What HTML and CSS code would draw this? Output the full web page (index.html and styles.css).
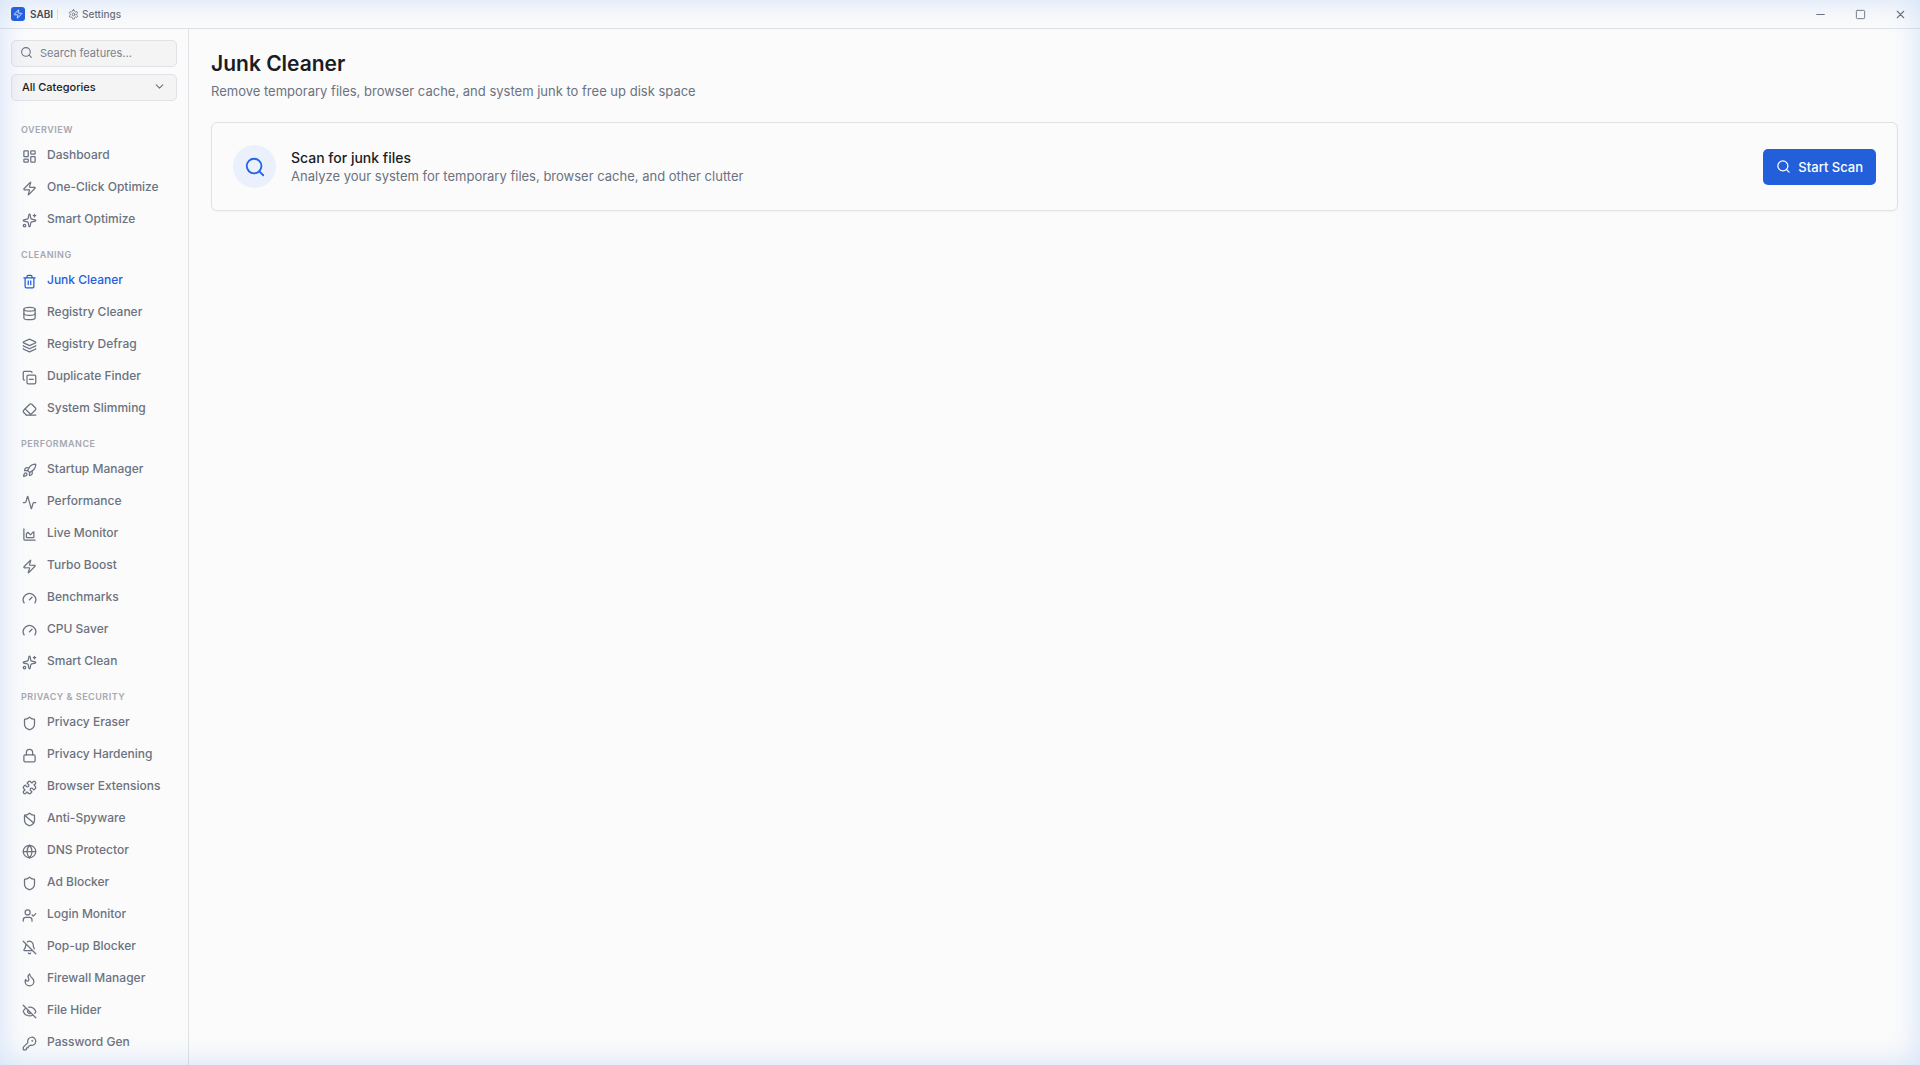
FILE: index.html
```html
<!DOCTYPE html>
<html lang="en">
<head>
    <meta charset="UTF-8">
    <meta name="viewport" content="width=device-width, initial-scale=1.0">
    <title>SABI - Junk Cleaner</title>
    <link rel="stylesheet" href="styles.css">
</head>
<body>

<!-- icon set -->
<svg class="sprite" aria-hidden="true">
    <symbol id="i-zap" viewBox="0 0 24 24"><path d="M4 14a1 1 0 0 1-.78-1.63l9.9-10.2a.5.5 0 0 1 .86.46l-1.92 6.02A1 1 0 0 0 13 10h7a1 1 0 0 1 .78 1.63l-9.9 10.2a.5.5 0 0 1-.86-.46l1.92-6.02A1 1 0 0 0 11 14z"/></symbol>
    <symbol id="i-settings" viewBox="0 0 24 24"><path d="M12.22 2h-.44a2 2 0 0 0-2 2v.18a2 2 0 0 1-1 1.73l-.43.25a2 2 0 0 1-2 0l-.15-.08a2 2 0 0 0-2.73.73l-.22.38a2 2 0 0 0 .73 2.73l.15.1a2 2 0 0 1 1 1.72v.51a2 2 0 0 1-1 1.74l-.15.09a2 2 0 0 0-.73 2.73l.22.38a2 2 0 0 0 2.73.73l.15-.08a2 2 0 0 1 2 0l.43.25a2 2 0 0 1 1 1.73V20a2 2 0 0 0 2 2h.44a2 2 0 0 0 2-2v-.18a2 2 0 0 1 1-1.73l.43-.25a2 2 0 0 1 2 0l.15.08a2 2 0 0 0 2.73-.73l.22-.39a2 2 0 0 0-.73-2.73l-.15-.08a2 2 0 0 1-1-1.74v-.5a2 2 0 0 1 1-1.74l.15-.09a2 2 0 0 0 .73-2.73l-.22-.38a2 2 0 0 0-2.73-.73l-.15.08a2 2 0 0 1-2 0l-.43-.25a2 2 0 0 1-1-1.73V4a2 2 0 0 0-2-2z"/><circle cx="12" cy="12" r="3"/></symbol>
    <symbol id="i-minus" viewBox="0 0 24 24"><path d="M5 12h14"/></symbol>
    <symbol id="i-square" viewBox="0 0 24 24"><rect width="18" height="18" x="3" y="3" rx="2"/></symbol>
    <symbol id="i-x" viewBox="0 0 24 24"><path d="M18 6 6 18M6 6l12 12"/></symbol>
    <symbol id="i-search" viewBox="0 0 24 24"><circle cx="11" cy="11" r="8"/><path d="m21 21-4.3-4.3"/></symbol>
    <symbol id="i-chevron" viewBox="0 0 24 24"><path d="m6 9 6 6 6-6"/></symbol>
    <symbol id="i-dashboard" viewBox="0 0 24 24"><rect width="7" height="9" x="3" y="3" rx="1"/><rect width="7" height="5" x="14" y="3" rx="1"/><rect width="7" height="9" x="14" y="12" rx="1"/><rect width="7" height="5" x="3" y="16" rx="1"/></symbol>
    <symbol id="i-sparkles" viewBox="0 0 24 24"><path d="M11.017 2.814a1 1 0 0 1 1.966 0l1.051 5.558a2 2 0 0 0 1.594 1.594l5.558 1.051a1 1 0 0 1 0 1.966l-5.558 1.051a2 2 0 0 0-1.594 1.594l-1.051 5.558a1 1 0 0 1-1.966 0l-1.051-5.558a2 2 0 0 0-1.594-1.594l-5.558-1.051a1 1 0 0 1 0-1.966l5.558-1.051a2 2 0 0 0 1.594-1.594z"/><path d="M20 2v4M22 4h-4"/><circle cx="4" cy="20" r="2"/></symbol>
    <symbol id="i-trash" viewBox="0 0 24 24"><path d="M3 6h18M19 6v14a2 2 0 0 1-2 2H7a2 2 0 0 1-2-2V6M8 6V4a2 2 0 0 1 2-2h4a2 2 0 0 1 2 2v2M10 11v6M14 11v6"/></symbol>
    <symbol id="i-database" viewBox="0 0 24 24"><ellipse cx="12" cy="5" rx="9" ry="3"/><path d="M3 5v14a9 3 0 0 0 18 0V5"/><path d="M3 12a9 3 0 0 0 18 0"/></symbol>
    <symbol id="i-layers" viewBox="0 0 24 24"><path d="M12.83 2.18a2 2 0 0 0-1.66 0L2.6 6.08a1 1 0 0 0 0 1.83l8.58 3.91a2 2 0 0 0 1.66 0l8.58-3.9a1 1 0 0 0 0-1.83z"/><path d="M2 12a1 1 0 0 0 .58.91l8.6 3.91a2 2 0 0 0 1.65 0l8.58-3.9A1 1 0 0 0 22 12"/><path d="M2 17a1 1 0 0 0 .58.91l8.6 3.91a2 2 0 0 0 1.65 0l8.58-3.9A1 1 0 0 0 22 17"/></symbol>
    <symbol id="i-copy-minus" viewBox="0 0 24 24"><path d="M12 15h6"/><rect width="14" height="14" x="8" y="8" rx="2"/><path d="M4 16c-1.1 0-2-.9-2-2V4c0-1.1.9-2 2-2h10c1.1 0 2 .9 2 2"/></symbol>
    <symbol id="i-eraser" viewBox="0 0 24 24"><path d="m7 21-4.3-4.3c-1-1-1-2.5 0-3.4l9.6-9.6c1-1 2.5-1 3.4 0l5.6 5.6c1 1 1 2.5 0 3.4L13 21"/><path d="M22 21H7M5 11l9 9"/></symbol>
    <symbol id="i-rocket" viewBox="0 0 24 24"><path d="M4.5 16.5c-1.5 1.26-2 5-2 5s3.74-.5 5-2c.71-.84.7-2.13-.09-2.91a2.18 2.18 0 0 0-2.91-.09z"/><path d="m12 15-3-3a22 22 0 0 1 2-3.95A12.88 12.88 0 0 1 22 2c0 2.72-.78 7.5-6 11a22.35 22.35 0 0 1-4 2z"/><path d="M9 12H4s.55-3.03 2-4c1.62-1.08 5 0 5 0M12 15v5s3.03-.55 4-2c1.08-1.62 0-5 0-5"/></symbol>
    <symbol id="i-activity" viewBox="0 0 24 24"><path d="M22 12h-2.48a2 2 0 0 0-1.93 1.46l-2.35 8.36a.25.25 0 0 1-.48 0L9.24 2.18a.25.25 0 0 0-.48 0l-2.35 8.36A2 2 0 0 1 4.49 12H2"/></symbol>
    <symbol id="i-chart" viewBox="0 0 24 24"><path d="M3 3v16a2 2 0 0 0 2 2h16"/><path d="M7 11.207a.5.5 0 0 1 .146-.353l2-2a.5.5 0 0 1 .708 0l3.292 3.292a.5.5 0 0 0 .708 0l4.292-4.292a.5.5 0 0 1 .854.353V16a1 1 0 0 1-1 1H8a1 1 0 0 1-1-1z"/></symbol>
    <symbol id="i-gauge" viewBox="0 0 24 24"><path d="m12 14 4-4M3.34 19a10 10 0 1 1 17.32 0"/></symbol>
    <symbol id="i-shield" viewBox="0 0 24 24"><path d="M20 13c0 5-3.5 7.5-7.66 8.95a1 1 0 0 1-.67-.01C7.5 20.5 4 18 4 13V6a1 1 0 0 1 1-1c2 0 4.5-1.2 6.24-2.72a1.17 1.17 0 0 1 1.52 0C14.51 3.81 17 5 19 5a1 1 0 0 1 1 1z"/></symbol>
    <symbol id="i-lock" viewBox="0 0 24 24"><rect width="18" height="11" x="3" y="11" rx="2"/><path d="M7 11V7a5 5 0 0 1 10 0v4"/></symbol>
    <symbol id="i-puzzle" viewBox="0 0 24 24"><path d="M15.39 4.39a1 1 0 0 0 1.68-.474 2.5 2.5 0 1 1 3.014 3.015 1 1 0 0 0-.474 1.68l1.683 1.682a2.414 2.414 0 0 1 0 3.414L19.61 15.39a1 1 0 0 1-1.68-.474 2.5 2.5 0 1 0-3.014 3.015 1 1 0 0 1 .474 1.68l-1.683 1.682a2.414 2.414 0 0 1-3.414 0L8.61 19.61a1 1 0 0 0-1.68.474 2.5 2.5 0 1 1-3.014-3.015 1 1 0 0 0 .474-1.68l-1.683-1.682a2.414 2.414 0 0 1 0-3.414L4.39 8.61a1 1 0 0 1 1.68.474 2.5 2.5 0 1 0 3.014-3.015 1 1 0 0 1-.474-1.68l1.683-1.682a2.414 2.414 0 0 1 3.414 0z"/></symbol>
    <symbol id="i-shield-ban" viewBox="0 0 24 24"><path d="M20 13c0 5-3.5 7.5-7.66 8.95a1 1 0 0 1-.67-.01C7.5 20.5 4 18 4 13V6a1 1 0 0 1 1-1c2 0 4.5-1.2 6.24-2.72a1.17 1.17 0 0 1 1.52 0C14.51 3.81 17 5 19 5a1 1 0 0 1 1 1z"/><path d="m4.243 5.21 14.39 12.472"/></symbol>
    <symbol id="i-globe" viewBox="0 0 24 24"><circle cx="12" cy="12" r="10"/><path d="M12 2a14.5 14.5 0 0 0 0 20 14.5 14.5 0 0 0 0-20M2 12h20"/></symbol>
    <symbol id="i-user-check" viewBox="0 0 24 24"><path d="m16 11 2 2 4-4M16 21v-2a4 4 0 0 0-4-4H6a4 4 0 0 0-4 4v2"/><circle cx="9" cy="7" r="4"/></symbol>
    <symbol id="i-bell-off" viewBox="0 0 24 24"><path d="M10.268 21a2 2 0 0 0 3.464 0M17 17H4a1 1 0 0 1-.74-1.673C4.59 13.956 6 12.499 6 8a6 6 0 0 1 .258-1.742M2 2l20 20M8.668 3.01A6 6 0 0 1 18 8c0 2.687.77 4.653 1.707 6.05"/></symbol>
    <symbol id="i-flame" viewBox="0 0 24 24"><path d="M8.5 14.5A2.5 2.5 0 0 0 11 12c0-1.38-.5-2-1-3-1.072-2.143-.224-4.054 2-6 .5 2.5 2 4.9 4 6.5 2 1.6 3 3.5 3 5.5a7 7 0 1 1-14 0c0-1.153.433-2.294 1-3a2.5 2.5 0 0 0 2.5 2.5z"/></symbol>
    <symbol id="i-eye-off" viewBox="0 0 24 24"><path d="M10.733 5.076a10.744 10.744 0 0 1 11.205 6.575 1 1 0 0 1 0 .696 10.747 10.747 0 0 1-1.444 2.49M14.084 14.158a3 3 0 0 1-4.242-4.242M17.479 17.499a10.75 10.75 0 0 1-15.417-5.151 1 1 0 0 1 0-.696 10.75 10.75 0 0 1 4.446-5.143M2 2l20 20"/></symbol>
    <symbol id="i-key" viewBox="0 0 24 24"><path d="M2.586 17.414A2 2 0 0 0 2 18.828V21a1 1 0 0 0 1 1h3a1 1 0 0 0 1-1v-1a1 1 0 0 1 1-1h1a1 1 0 0 0 1-1v-1a1 1 0 0 1 1-1h.172a2 2 0 0 0 1.414-.586l.814-.814a6.5 6.5 0 1 0-4-4z"/><circle cx="16.5" cy="7.5" r=".5"/></symbol>
</svg>

<div class="app">
    <header class="titlebar">
        <div class="logo"><svg class="icon"><use href="#i-zap"/></svg></div>
        <span class="brand">SABI</span>
        <span class="divider"></span>
        <button class="settings-btn"><svg class="icon"><use href="#i-settings"/></svg>Settings</button>
        <div class="window-controls">
            <button aria-label="Minimize"><svg class="icon"><use href="#i-minus"/></svg></button>
            <button aria-label="Maximize"><svg class="icon icon-max"><use href="#i-square"/></svg></button>
            <button aria-label="Close"><svg class="icon icon-close"><use href="#i-x"/></svg></button>
        </div>
    </header>

    <div class="body">
        <aside class="sidebar">
            <div class="filters">
                <label class="field" for="search">
                    <svg class="icon"><use href="#i-search"/></svg>
                    <input type="text" id="search" placeholder="Search features..." aria-label="Search features">
                </label>
                <div class="field">
                    <select id="category" aria-label="Category">
                        <option>All Categories</option>
                        <option>Overview</option>
                        <option>Cleaning</option>
                        <option>Performance</option>
                        <option>Privacy &amp; Security</option>
                    </select>
                    <svg class="icon chevron"><use href="#i-chevron"/></svg>
                </div>
            </div>

            <nav class="nav">
                <h2>Overview</h2>
                <a href="#"><svg class="icon"><use href="#i-dashboard"/></svg><span>Dashboard</span></a>
                <a href="#"><svg class="icon"><use href="#i-zap"/></svg><span>One-Click Optimize</span></a>
                <a href="#"><svg class="icon"><use href="#i-sparkles"/></svg><span>Smart Optimize</span></a>

                <h2>Cleaning</h2>
                <a href="#" class="active"><svg class="icon"><use href="#i-trash"/></svg><span>Junk Cleaner</span></a>
                <a href="#"><svg class="icon"><use href="#i-database"/></svg><span>Registry Cleaner</span></a>
                <a href="#"><svg class="icon"><use href="#i-layers"/></svg><span>Registry Defrag</span></a>
                <a href="#"><svg class="icon"><use href="#i-copy-minus"/></svg><span>Duplicate Finder</span></a>
                <a href="#"><svg class="icon"><use href="#i-eraser"/></svg><span>System Slimming</span></a>

                <h2>Performance</h2>
                <a href="#"><svg class="icon"><use href="#i-rocket"/></svg><span>Startup Manager</span></a>
                <a href="#"><svg class="icon"><use href="#i-activity"/></svg><span>Performance</span></a>
                <a href="#"><svg class="icon"><use href="#i-chart"/></svg><span>Live Monitor</span></a>
                <a href="#"><svg class="icon"><use href="#i-zap"/></svg><span>Turbo Boost</span></a>
                <a href="#"><svg class="icon"><use href="#i-gauge"/></svg><span>Benchmarks</span></a>
                <a href="#"><svg class="icon"><use href="#i-gauge"/></svg><span>CPU Saver</span></a>
                <a href="#"><svg class="icon"><use href="#i-sparkles"/></svg><span>Smart Clean</span></a>

                <h2>Privacy &amp; Security</h2>
                <a href="#"><svg class="icon"><use href="#i-shield"/></svg><span>Privacy Eraser</span></a>
                <a href="#"><svg class="icon"><use href="#i-lock"/></svg><span>Privacy Hardening</span></a>
                <a href="#"><svg class="icon"><use href="#i-puzzle"/></svg><span>Browser Extensions</span></a>
                <a href="#"><svg class="icon"><use href="#i-shield-ban"/></svg><span>Anti-Spyware</span></a>
                <a href="#"><svg class="icon"><use href="#i-globe"/></svg><span>DNS Protector</span></a>
                <a href="#"><svg class="icon"><use href="#i-shield"/></svg><span>Ad Blocker</span></a>
                <a href="#"><svg class="icon"><use href="#i-user-check"/></svg><span>Login Monitor</span></a>
                <a href="#"><svg class="icon"><use href="#i-bell-off"/></svg><span>Pop-up Blocker</span></a>
                <a href="#"><svg class="icon"><use href="#i-flame"/></svg><span>Firewall Manager</span></a>
                <a href="#"><svg class="icon"><use href="#i-eye-off"/></svg><span>File Hider</span></a>
                <a href="#"><svg class="icon"><use href="#i-key"/></svg><span>Password Gen</span></a>
            </nav>
        </aside>

        <main class="content">
            <h1>Junk Cleaner</h1>
            <p class="subtitle">Remove temporary files, browser cache, and system junk to free up disk space</p>

            <section class="card">
                <div class="card-icon"><svg class="icon"><use href="#i-search"/></svg></div>
                <div class="card-text">
                    <h3>Scan for junk files</h3>
                    <p>Analyze your system for temporary files, browser cache, and other clutter</p>
                </div>
                <button class="scan-btn"><svg class="icon"><use href="#i-search"/></svg>Start Scan</button>
            </section>
        </main>
    </div>
</div>

<div class="glow"></div>

</body>
</html>
```
FILE: styles.css
```css
* {
    box-sizing: border-box;
}
body {
    font-family: 'Inter', sans-serif;
    background-color: #fbfbfb;
    color: #1a1d24;
    margin: 0;
}
h1, h2, h3, p {
    margin: 0;
}
button, input, select {
    font-family: inherit;
    color: inherit;
    background: none;
    border: none;
    padding: 0;
    margin: 0;
}
button {
    cursor: pointer;
}
.sprite {
    display: none;
}
.icon {
    width: 15px;
    height: 15px;
    flex-shrink: 0;
    fill: none;
    stroke: currentColor;
    stroke-width: 2;
    stroke-linecap: round;
    stroke-linejoin: round;
}
.app {
    display: flex;
    flex-direction: column;
    height: 100vh;
    overflow: hidden;
}

/* title bar */
.titlebar {
    display: flex;
    align-items: center;
    height: 29px;
    flex-shrink: 0;
    padding-left: 11px;
    border-bottom: 1px solid #e1e2e8;
    font-size: 10px;
    color: #6b7280;
}
.logo {
    display: flex;
    align-items: center;
    justify-content: center;
    width: 14px;
    height: 14px;
    border-radius: 3px;
    background-color: #235fdb;
    color: #fff;
}
.logo .icon {
    width: 10px;
    height: 10px;
}
.brand {
    margin: 0 4px 0 5px;
    font-weight: 600;
    color: #484c56;
}
.divider {
    width: 1px;
    height: 11px;
    background-color: #dfe4ec;
}
.settings-btn {
    display: flex;
    align-items: center;
    gap: 3px;
    margin-left: 10px;
    font-size: 10px;
    font-weight: 500;
}
.settings-btn .icon {
    width: 11px;
    height: 11px;
}
.window-controls {
    display: flex;
    align-self: stretch;
    margin-left: auto;
}
.window-controls button {
    display: flex;
    align-items: center;
    justify-content: center;
    width: 40px;
}
.window-controls .icon {
    width: 13px;
    height: 13px;
}
.window-controls .icon-max {
    width: 11px;
    height: 11px;
}

/* sidebar */
.body {
    display: flex;
    flex: 1;
    min-height: 0;
}
.sidebar {
    width: 189px;
    flex-shrink: 0;
    border-right: 1px solid #e1e2e6;
    overflow: hidden;
}
.filters {
    display: flex;
    flex-direction: column;
    gap: 7px;
    padding: 11px 11px 10px;
}
.field {
    display: flex;
    align-items: center;
    gap: 7px;
    height: 27px;
    padding: 0 10px 2px 8px;
    border: 1px solid #e1e2e8;
    border-radius: 5px;
    background-color: #f4f4f5;
    color: #6b7280;
}
.field .icon {
    width: 13px;
    height: 13px;
}
.field input {
    flex: 1;
    min-width: 0;
    font-size: 11px;
    outline: none;
}
.field input::placeholder {
    color: #7a808c;
    opacity: 1;
}
.field select {
    flex: 1;
    min-width: 0;
    padding-left: 2px;
    font-size: 11px;
    font-weight: 500;
    color: #1a1d24;
    appearance: none;
    outline: none;
}
.nav {
    display: flex;
    flex-direction: column;
    padding: 0 11px;
}
.nav h2 {
    height: 29px;
    padding: 13px 0 0 10px;
    font-size: 9px;
    line-height: 12px;
    font-weight: 600;
    letter-spacing: .5px;
    text-transform: uppercase;
    color: #a5a8b0;
}
.nav a {
    display: flex;
    align-items: center;
    gap: 10px;
    height: 32px;
    padding: 0 11px;
    font-size: 12px;
    line-height: 16px;
    font-weight: 500;
    color: #6b7280;
    text-decoration: none;
    white-space: nowrap;
}
.nav a.active {
    color: #235fdb;
}
.nav span {
    padding-bottom: 2px;
}

/* main area */
.content {
    flex: 1;
    min-width: 0;
    padding: 21px 22px;
}
h1 {
    font-size: 21px;
    line-height: 28px;
    font-weight: 600;
}
.subtitle {
    margin: 4px 0 22px;
    font-size: 13px;
    line-height: 18px;
    color: #6b7280;
}
.card {
    display: flex;
    align-items: center;
    gap: 15px;
    padding: 22px 21px;
    border: 1px solid #e1e2e8;
    border-radius: 6px;
    box-shadow: 0 1px 2px rgba(0, 0, 0, 0.04);
}
.card-icon {
    display: flex;
    align-items: center;
    justify-content: center;
    width: 43px;
    height: 43px;
    border-radius: 50%;
    background-color: #eaf1fd;
    color: #2563eb;
}
.card-icon .icon {
    width: 22px;
    height: 22px;
}
.card-text {
    flex: 1;
}
.card h3 {
    font-size: 14px;
    line-height: 19px;
    font-weight: 500;
}
.card p {
    font-size: 13px;
    line-height: 18px;
    color: #6b7280;
}
.scan-btn {
    display: flex;
    align-items: center;
    gap: 7px;
    height: 36px;
    padding: 0 13px;
    border-radius: 5px;
    background-color: #235fdb;
    color: #fff;
    font-size: 13px;
    font-weight: 500;
}

/* soft blue light round the window edge */
.glow {
    position: fixed;
    inset: 0;
    pointer-events: none;
    box-shadow: inset 0 0 30px rgba(59, 130, 246, 0.22);
}
```
